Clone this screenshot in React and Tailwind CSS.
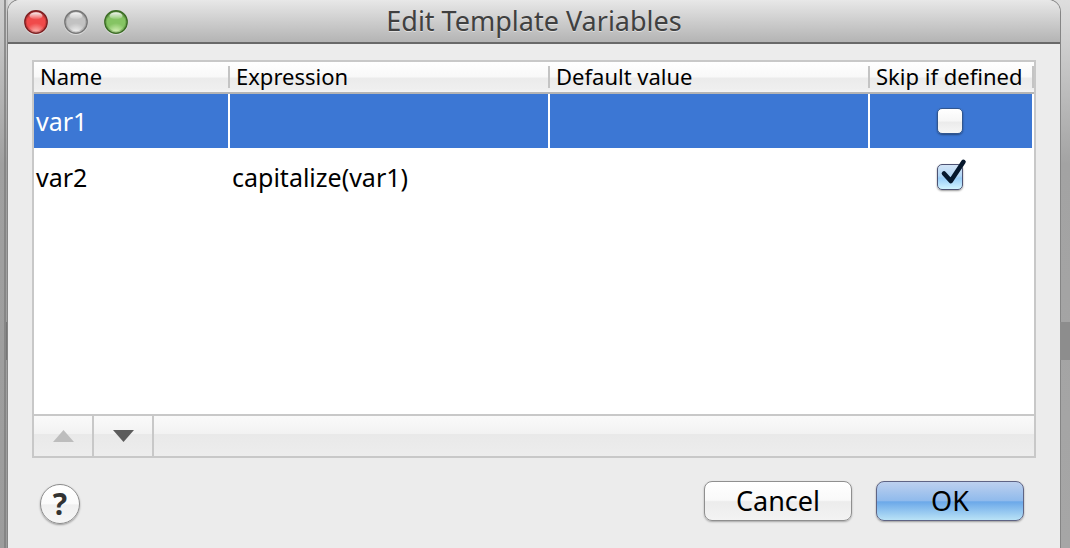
import { useState } from "react";

const initialRows = [
  { name: "var1", expression: "", value: "", skip: false },
  { name: "var2", expression: "capitalize(var1)", value: "", skip: true },
];

const headings = ["Name", "Expression", "Default value", "Skip if defined"];

const lights = [
  { id: "close", label: "Close", rim: "#7d2022", top: "#b5383b", mid: "#f04a4a", low: "#ffc2bd" },
  { id: "minimize", label: "Minimize", rim: "#777", top: "#9a9a9a", mid: "#c2c2c2", low: "#f6f6f6" },
  { id: "zoom", label: "Zoom", rim: "#3c6c26", top: "#5c8b42", mid: "#85c463", low: "#e2f8c4" },
];

function TrafficLight({ light }) {
  return (
    <button type="button" aria-label={light.label} className="size-6">
      <svg viewBox="0 0 24 24" className="size-6 overflow-visible">
        <defs>
          <radialGradient id={`${light.id}-body`} cx="0.5" cy="1" r="1">
            <stop offset="0" stopColor={light.low} />
            <stop offset="0.45" stopColor={light.mid} />
            <stop offset="0.75" stopColor={light.mid} />
            <stop offset="1" stopColor={light.top} />
          </radialGradient>
          <linearGradient id={`${light.id}-shine`} x1="0" y1="0" x2="0" y2="1">
            <stop offset="0" stopColor="#fff" stopOpacity="0.95" />
            <stop offset="1" stopColor="#fff" stopOpacity="0.05" />
          </linearGradient>
        </defs>
        <circle cx="12" cy="13" r="12" fill="#fff" opacity="0.45" />
        <circle cx="12" cy="12" r="11.2" fill={`url(#${light.id}-body)`} stroke={light.rim} strokeWidth="1.4" />
        <circle cx="12" cy="12" r="10" fill="none" stroke={light.rim} strokeWidth="1.4" opacity="0.3" />
        <ellipse cx="12" cy="5.8" rx="6.5" ry="3.6" fill={`url(#${light.id}-shine)`} />
      </svg>
    </button>
  );
}

function SkipBox({ row, onToggle }) {
  return (
    <label className="relative block size-[26px]">
      <input
        type="checkbox"
        aria-label={`Skip ${row.name} if defined`}
        checked={row.skip}
        onChange={onToggle}
        className="peer block size-[26px] appearance-none rounded-[5px] border border-[#31568f] bg-[linear-gradient(to_bottom,#ffffff,#f6f6f6_50%,#ebebeb_55%,#f6f6f6)] shadow-[0_1px_2px_rgba(0,0,0,0.4)] checked:border-[#4d5273] checked:bg-[linear-gradient(to_bottom,#d3e4f6,#b4d7f6_45%,#99cdf8_55%,#d2f4ff)]"
      />
      <svg viewBox="0 0 32 32" fill="none" className="pointer-events-none absolute -top-1.5 left-0 hidden size-8 peer-checked:block">
        <path d="M7 15.5 L13.8 23 L26.5 3.8" stroke="#06172d" strokeWidth="4.6" strokeLinecap="round" strokeLinejoin="round" />
      </svg>
    </label>
  );
}

export default function App() {
  const [rows, setRows] = useState(initialRows);
  const [selected, setSelected] = useState(0);

  const toggle = (index) =>
    setRows(rows.map((row, i) => (i === index ? { ...row, skip: !row.skip } : row)));

  const move = (step) => {
    const target = selected + step;
    if (target < 0 || target >= rows.length) return;
    const next = [...rows];
    [next[selected], next[target]] = [next[target], next[selected]];
    setRows(next);
    setSelected(target);
  };

  return (
    <div className="flex min-h-screen bg-[linear-gradient(to_bottom,#dedede,#a3a3a3_30%,#a6a6a6)] font-['Noto_Sans','Lucida_Grande',sans-serif] text-black">
      <div className="flex w-2 shrink-0 flex-col bg-[linear-gradient(to_bottom,#d0d0d0,#a0a0a0_30%,#9c9c9c)]">
        <div className="ml-1 flex flex-1 flex-col border-l-2 border-[#808080]/80 pt-[322px]">
          <div className="h-[38px] bg-[#777]" />
        </div>
      </div>

      <main className="flex min-w-0 flex-1 flex-col rounded-t-xl bg-[#ececec] shadow-[0_0_0_1px_#858585]">
        <header className="grid h-11 shrink-0 grid-cols-[1fr_auto_1fr] items-center rounded-t-xl border-b-2 border-[#696969] bg-linear-to-b from-[#e8e8e8] to-[#b4b4b4] px-4">
          <div className="flex gap-4 pt-0.5">
            {lights.map((light) => (
              <TrafficLight key={light.id} light={light} />
            ))}
          </div>
          <h1 className="text-[27px] leading-8 text-[#404040] [text-shadow:0_1px_0_rgba(255,255,255,0.5)]">
            Edit Template Variables
          </h1>
        </header>

        <div className="flex flex-1 flex-col px-6 pt-4 pb-6">
          <section className="flex flex-1 flex-col border-2 border-[#c8c8c8] bg-white">
            <div className="flex-1">
              <table className="w-full table-fixed border-separate border-spacing-0 text-left">
                <colgroup>
                  <col className="w-[19.6%]" />
                  <col className="w-[32%]" />
                  <col className="w-[32%]" />
                  <col className="w-[16.4%]" />
                </colgroup>
                <thead>
                  <tr className="h-8 bg-[linear-gradient(to_bottom,#ffffff,#f8f8f8_47%,#ebebeb_50%,#efefef_85%,#fafafa)]">
                    {headings.map((heading) => (
                      <th key={heading} scope="col" className="border-b-2 border-[#b5b5b5] p-0 font-normal">
                        <div className="flex h-[22px] border-r-2 border-[#c4c4c4] pl-1.5 text-[22px] leading-5 whitespace-nowrap">
                          {heading}
                        </div>
                      </th>
                    ))}
                  </tr>
                </thead>
                <tbody className="text-[25px] leading-9">
                  {rows.map((row, index) => (
                    <tr
                      key={row.name}
                      aria-selected={selected === index}
                      onClick={() => setSelected(index)}
                      className="h-14 aria-selected:bg-[#3c77d4] aria-selected:text-white"
                    >
                      <td className="border-r-2 border-b-2 border-white p-0 pl-0.5">{row.name}</td>
                      <td className="border-r-2 border-b-2 border-white p-0 pl-0.5">{row.expression}</td>
                      <td className="border-r-2 border-b-2 border-white p-0 pl-0.5">{row.value}</td>
                      <td className="border-r-2 border-b-2 border-white p-0 pr-0.5">
                        <div className="flex justify-center">
                          <SkipBox row={row} onToggle={() => toggle(index)} />
                        </div>
                      </td>
                    </tr>
                  ))}
                </tbody>
              </table>
            </div>
            <div className="flex h-[42px] shrink-0 border-t-2 border-[#c8c8c8] bg-[linear-gradient(to_bottom,#fafafa,#f2f2f2_45%,#e9e9e9_46%,#ededed)]">
              <button
                type="button"
                aria-label="Move up"
                disabled={selected === 0}
                onClick={() => move(-1)}
                className="flex w-[60px] items-center justify-center border-r-2 border-[#c8c8c8] text-[#5c5c5c] disabled:text-[#bdbdbd]"
              >
                <svg viewBox="0 0 22 12" className="h-3 w-[22px]" fill="currentColor">
                  <path d="M11.5 0 L22 12 H1 Z" />
                </svg>
              </button>
              <button
                type="button"
                aria-label="Move down"
                disabled={selected === rows.length - 1}
                onClick={() => move(1)}
                className="flex w-[60px] items-center justify-center border-r-2 border-[#c8c8c8] text-[#5c5c5c] disabled:text-[#bdbdbd]"
              >
                <svg viewBox="0 0 22 12" className="h-3 w-[22px]" fill="currentColor">
                  <path d="M1 0 H22 L11.5 12 Z" />
                </svg>
              </button>
            </div>
          </section>

          <footer className="flex shrink-0 items-start justify-between pt-[23px] pr-3 pl-2">
            <button
              type="button"
              aria-label="Help"
              className="mt-[3px] flex size-10 items-center justify-center rounded-full border border-[#8c8c8c] bg-[linear-gradient(to_bottom,#ffffff,#fbfbfb_50%,#f0f0f0_52%,#f6f6f6)] text-[30px] leading-8 font-bold text-[#333] shadow-[0_1px_2px_rgba(0,0,0,0.35)]"
            >
              ?
            </button>
            <div className="flex gap-6">
              <button
                type="button"
                className="h-10 w-[148px] rounded-lg border border-[#8f8f8f] bg-[linear-gradient(to_bottom,#ffffff,#f9f9f9_48%,#ececec_52%,#f3f3f3)] text-[27px] leading-8 shadow-[0_1px_2px_rgba(0,0,0,0.3)]"
              >
                Cancel
              </button>
              <button
                type="button"
                className="h-10 w-[148px] rounded-lg border border-[#5f6484] bg-[linear-gradient(to_bottom,#bdd0ee,#8fbaec_50%,#6ba8e9_52%,#b9e2f6)] text-[27px] leading-8 shadow-[0_1px_2px_rgba(0,0,0,0.35)]"
              >
                OK
              </button>
            </div>
          </footer>
        </div>
      </main>

      <div className="w-2.5 shrink-0 pt-[322px]">
        <div className="h-[38px] bg-[#8d8d8d]" />
      </div>
    </div>
  );
}
